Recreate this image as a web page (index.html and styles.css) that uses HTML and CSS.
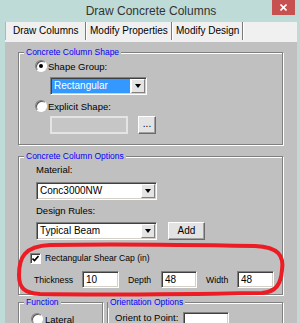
FILE: index.html
```html
<!DOCTYPE html>
<html lang="en">
<head>
<meta charset="UTF-8">
<meta name="viewport" content="width=device-width, initial-scale=1.0">
<title>Draw Concrete Columns</title>
<link rel="stylesheet" href="styles.css">
</head>
<body>
  <div class="window">
    <div class="titlebar">
      <span class="title">Draw Concrete Columns</span>
      <span class="close">
        <svg width="7" height="7" viewBox="0 0 7 7" fill="none" stroke="#fff" stroke-width="1.6">
          <line x1="0.5" y1="0.5" x2="6.5" y2="6.5"></line>
          <line x1="6.5" y1="0.5" x2="0.5" y2="6.5"></line>
        </svg>
      </span>
    </div>

    <div class="tabs">
      <div class="tab tab-draw">Draw Columns</div>
      <div class="tab tab-props">Modify Properties</div>
      <div class="tab tab-design">Modify Design</div>
    </div>

    <div class="panel">
      <fieldset class="group group-shape">
        <legend>Concrete Column Shape</legend>
        <div class="radio-row first">
          <span class="radio checked"></span>
          <span>Shape Group:</span>
        </div>
        <div class="combo combo-shape combo-sel">
          <span class="combo-text">Rectangular</span>
          <span class="combo-btn"></span>
        </div>
        <div class="radio-row">
          <span class="radio"></span>
          <span>Explicit Shape:</span>
        </div>
        <div class="explicit-row">
          <span class="textbox disabled"></span>
          <span class="btn btn-dots">...</span>
        </div>
      </fieldset>

      <fieldset class="group group-options">
        <legend>Concrete Column Options</legend>
        <div class="field-label first">Material:</div>
        <div class="combo combo-wide">
          <span class="combo-text">Conc3000NW</span>
          <span class="combo-btn"></span>
        </div>
        <div class="field-label">Design Rules:</div>
        <div class="rules-row">
          <div class="combo combo-wide">
            <span class="combo-text">Typical Beam</span>
            <span class="combo-btn"></span>
          </div>
          <span class="btn btn-add">Add</span>
        </div>
        <div class="check-row">
          <span class="checkbox">
            <svg width="7" height="7" viewBox="0 0 7 7" fill="none" stroke="#000" stroke-width="1.6">
              <polyline points="0.5 3.5 2.5 5.5 6.5 1"></polyline>
            </svg>
          </span>
          <span>Rectangular Shear Cap (in)</span>
        </div>
        <div class="cap-row">
          <span class="cap-label label-thick">Thickness</span>
          <span class="textbox cap-input">10</span>
          <span class="cap-label label-depth">Depth</span>
          <span class="textbox cap-input cap-depth">48</span>
          <span class="cap-label label-width">Width</span>
          <span class="textbox cap-input">48</span>
        </div>
      </fieldset>

      <div class="bottom-groups">
        <fieldset class="group group-function">
          <legend>Function</legend>
          <div class="radio-row lateral">
            <span class="radio"></span>
            <span>Lateral</span>
          </div>
        </fieldset>
        <fieldset class="group group-orient">
          <legend>Orientation Options</legend>
          <div class="orient-row">
            <span class="orient-label">Orient to Point:</span>
            <span class="textbox orient-input"></span>
          </div>
        </fieldset>
      </div>
    </div>

    <svg class="markup" width="300" height="323" viewBox="0 0 300 323" fill="none">
      <path d="M50 245 C100 244 200 245 255 246 C279 247 284 256 282 270 C281 284 276 292 262 293 C200 294 100 295 40 294 C24 293 19 288 19 275 C19 258 24 246 50 245 Z" stroke="#ed1c24" stroke-width="4"></path>
    </svg>
  </div>
</body>
</html>
```

FILE: styles.css
```css
* {
  box-sizing: border-box;
}

body {
  margin: 0;
  font-family: "Liberation Sans", Arial, sans-serif;
  font-size: 9.5px;
  color: #000;
  background-color: #bfdbd8;
}

.window {
  position: relative;
  width: 300px;
  height: 323px;
  overflow: hidden;
  padding: 0 3px 0 5px;
  background-color: #bfdbd8;
}

/* title bar */
.titlebar {
  display: grid;
  grid-template-columns: 1fr auto 1fr;
  height: 22px;
}

.title {
  grid-column: 2;
  font-size: 12px;
  line-height: 22px;
  color: #333;
}

.close {
  grid-column: 3;
  justify-self: end;
  align-self: start;
  display: flex;
  align-items: center;
  justify-content: center;
  width: 23px;
  height: 15px;
  margin-right: 2px;
  background-color: #c75050;
}

/* tabs */
.tabs {
  display: flex;
  height: 20px;
  background-color: #f0f0f0;
}

.tab {
  height: 18px;
  line-height: 18px;
  font-size: 10px;
  padding-left: 4px;
  white-space: nowrap;
  border-right: 1px solid #7a7a7a;
  box-shadow: 1px 0 0 #fff;
}

.tab-draw {
  width: 81px;
  padding-left: 7px;
  border-left: 1px solid #b4b4b4;
}

.tab-props {
  width: 86px;
}

.tab-design {
  width: 71px;
}

/* panel and group boxes */
.panel {
  height: 301px;
  padding: 5px 0 0 13px;
  background-color: #c0c0c0;
}

.group {
  margin: 0;
  padding: 0;
  min-width: 0;
  border: 1px solid #808080;
  box-shadow: 1px 1px 0 #fff, inset 1px 1px 0 #fff;
}

.group legend {
  margin-left: 5px;
  padding: 0 2px;
  font-size: 8.5px;
  line-height: 11px;
  color: #00f;
  background-color: #c0c0c0;
}

.group-shape {
  width: 265px;
  height: 98px;
}

.group-options {
  width: 265px;
  height: 144px;
  margin-top: 6px;
}

.bottom-groups {
  display: flex;
  gap: 4px;
  margin-top: 2px;
}

.group-function {
  width: 85px;
  height: 40px;
}

.group-orient {
  width: 176px;
  height: 40px;
}

.group-orient legend {
  margin-left: 0;
}

/* radios and checkbox */
.radio-row {
  display: flex;
  align-items: center;
  gap: 1px;
  height: 12px;
  margin: 5px 0 0 16px;
}

.radio-row.first {
  margin-top: 2px;
}

.radio-row.lateral {
  gap: 2px;
  margin: 5px 0 0 12px;
}

.radio {
  position: relative;
  width: 12px;
  height: 12px;
  border-radius: 50%;
  background-color: #fff;
  border: 1px solid;
  border-color: #808080 #fff #fff #808080;
  box-shadow: inset 1px 1px 0 #555;
}

.radio.checked::after {
  content: "";
  position: absolute;
  left: 3px;
  top: 3px;
  width: 4px;
  height: 4px;
  border-radius: 50%;
  background-color: #000;
}

.check-row {
  display: flex;
  align-items: center;
  gap: 4px;
  height: 12px;
  margin: 12px 0 0 11px;
  font-size: 8.6px;
}

.checkbox {
  display: flex;
  align-items: center;
  justify-content: center;
  width: 11px;
  height: 11px;
  background-color: #fff;
  border: 1px solid;
  border-color: #808080 #fff #fff #808080;
  box-shadow: inset 1px 1px 0 #404040;
}

/* combo boxes */
.combo {
  display: flex;
  height: 18px;
  padding: 1px;
  background-color: #fff;
  border: 1px solid;
  border-color: #808080 #fff #fff #808080;
  box-shadow: inset 1px 1px 0 #404040, inset -1px -1px 0 #d4d0c8;
}

.combo-shape {
  width: 97px;
  margin: 5px 0 0 31px;
}

.combo-wide {
  width: 121px;
}

.combo-text {
  flex: 1;
  padding-left: 2px;
  font-size: 10px;
  line-height: 14px;
  white-space: nowrap;
}

.combo-sel .combo-text {
  margin-right: 1px;
  background-color: #3399ff;
  color: #fff;
}

.combo-btn {
  display: flex;
  align-items: center;
  justify-content: center;
  width: 14px;
  height: 14px;
  background-color: #e4e4e4;
  border: 1px solid;
  border-color: #fff #808080 #808080 #fff;
}

.combo-btn::after {
  content: "";
  border-left: 3.5px solid transparent;
  border-right: 3.5px solid transparent;
  border-top: 4px solid #000;
}

/* text boxes and buttons */
.textbox {
  display: block;
  height: 17px;
  padding-left: 3px;
  font-size: 10px;
  line-height: 15px;
  background-color: #fff;
  border: 1px solid;
  border-color: #808080 #fff #fff #808080;
  box-shadow: inset 1px 1px 0 #404040, inset -1px -1px 0 #d4d0c8;
}

.textbox.disabled {
  width: 78px;
  height: 18px;
  background-color: #c6c6c6;
  border: 2px solid #e4e4e4;
  box-shadow: none;
}

.btn {
  display: block;
  height: 18px;
  font-size: 10px;
  line-height: 16px;
  text-align: center;
  background-color: #e3e3e3;
  border: 1px solid;
  border-color: #fff #6a6a6a #6a6a6a #fff;
  box-shadow: inset -1px -1px 0 #a0a0a0;
}

.explicit-row {
  display: flex;
  gap: 10px;
  margin: 4px 0 0 31px;
}

.btn-dots {
  width: 18px;
  line-height: 14px;
}

.field-label {
  height: 12px;
  line-height: 12px;
  margin: 5px 0 0 17px;
}

.field-label.first {
  margin-top: 2px;
}

.group-options .combo-wide {
  margin: 6px 0 0 17px;
}

.rules-row {
  display: flex;
  margin-top: 5px;
}

.rules-row .combo-wide {
  margin-top: 0;
}

.btn-add {
  width: 37px;
  margin-left: 11px;
}

/* shear cap row */
.cap-row {
  display: flex;
  align-items: center;
  margin: 7px 0 0 15px;
}

.cap-label {
  font-size: 8.7px;
}

.label-thick {
  width: 48px;
}

.label-depth {
  width: 33px;
  margin-left: 9px;
}

.label-width {
  width: 31px;
  margin-left: 9px;
}

.cap-input {
  width: 37px;
}

.cap-input.cap-depth {
  width: 36px;
}

/* orientation */
.orient-row {
  display: flex;
  align-items: flex-start;
  margin: 4px 0 0 7px;
}

.orient-label {
  width: 68px;
  line-height: 12px;
}

.orient-input {
  width: 46px;
  height: 17px;
}

/* red markup drawn over the dialog */
.markup {
  position: absolute;
  left: 0;
  top: 0;
  pointer-events: none;
}
```
